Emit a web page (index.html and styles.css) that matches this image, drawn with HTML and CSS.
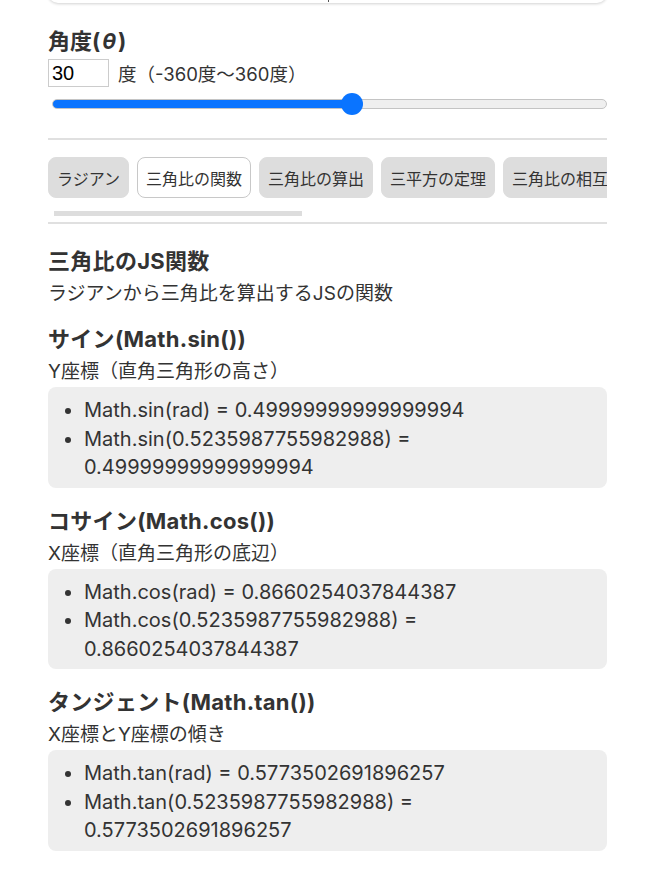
FILE: index.html
```html
<!DOCTYPE html>
<html lang="ja">
<head>
  <meta charset="UTF-8">
  <meta name="viewport" content="width=device-width, initial-scale=1.0">
  <title>三角比のJS関数</title>
  <link rel="stylesheet" href="styles.css">
</head>
<body>
  <div class="page">
    <!-- graph card (scrolled off the top) -->
    <div class="chart-card"></div>

    <h2 class="label">角度(<var>θ</var>)</h2>
    <div class="angle-row">
      <input type="text" class="angle-input" value="30">
      <span class="angle-note">度（-360度〜360度）</span>
    </div>
    <input type="range" class="angle-range" min="-360" max="360" value="30">

    <hr class="line">

    <!-- Tabs -->
    <div class="tabs">
      <button class="tab">ラジアン</button>
      <button class="tab active">三角比の関数</button>
      <button class="tab">三角比の算出</button>
      <button class="tab">三平方の定理</button>
      <button class="tab">三角比の相互関係</button>
    </div>
    <div class="scroll-track"><div class="scroll-thumb"></div></div>

    <hr class="line line-tight">

    <h3 class="title">三角比のJS関数</h3>
    <p class="lead">ラジアンから三角比を算出するJSの関数</p>

    <div class="func">
      <h3 class="title">サイン(Math.sin())</h3>
      <p class="lead">Y座標（直角三角形の高さ）</p>
      <ul class="result">
        <li>Math.sin(rad) = 0.49999999999999994</li>
        <li>Math.sin(0.5235987755982988) = 0.49999999999999994</li>
      </ul>
    </div>

    <div class="func">
      <h3 class="title">コサイン(Math.cos())</h3>
      <p class="lead">X座標（直角三角形の底辺）</p>
      <ul class="result">
        <li>Math.cos(rad) = 0.8660254037844387</li>
        <li>Math.cos(0.5235987755982988) = 0.8660254037844387</li>
      </ul>
    </div>

    <div class="func">
      <h3 class="title">タンジェント(Math.tan())</h3>
      <p class="lead">X座標とY座標の傾き</p>
      <ul class="result">
        <li>Math.tan(rad) = 0.5773502691896257</li>
        <li>Math.tan(0.5235987755982988) = 0.5773502691896257</li>
      </ul>
    </div>
  </div>
</body>
</html>
```

FILE: styles.css
```css
body {
  margin: 0;
  font-family: Inter, "Noto Sans CJK JP", sans-serif;
  color: #333;
  background: #fff;
  overflow: hidden;
}

.page {
  padding: 0 47px 40px 48px;
}

/* card of the graph, only its bottom edge is visible */
.chart-card {
  position: relative;
  height: 30px;
  margin-top: -27px;
  border-radius: 10px;
  box-shadow: 0 1px 3px rgba(0, 0, 0, 0.18);
}

.chart-card::after {
  content: "";
  position: absolute;
  left: 50%;
  top: 0;
  bottom: 1px;
  width: 1px;
  background: #555;
}

.label {
  font-size: 22px;
  line-height: 28px;
  font-weight: bold;
  margin: 24px 0 0;
}

.label var {
  font-style: italic;
  padding: 0 2px;
}

.angle-row {
  display: flex;
  align-items: center;
  margin-top: 4px;
}

.angle-input {
  box-sizing: border-box;
  width: 61px;
  height: 28px;
  border: 1px solid #ccc;
  padding: 0 3px;
  font-family: "Liberation Sans", sans-serif;
  font-size: 20px;
  color: #000;
}

.angle-note {
  margin-left: 9px;
  font-size: 18.5px;
}

.angle-range {
  -webkit-appearance: none;
  appearance: none;
  display: block;
  box-sizing: border-box;
  width: calc(100% - 4px);
  height: 22px;
  margin: 6px 0 0 4px;
  background: transparent;
}

.angle-range::-webkit-slider-runnable-track {
  height: 10px;
  border-radius: 5px;
  box-sizing: border-box;
  border: 1px solid #c4c4c4;
  background: linear-gradient(to right, #0a74ff 54%, #efefef 54%);
}

.angle-range::-webkit-slider-thumb {
  -webkit-appearance: none;
  width: 22px;
  height: 22px;
  margin-top: -7px;
  border-radius: 50%;
  background: #0a74ff;
  border: none;
}

.line {
  border: none;
  border-top: 2px solid #e0e0e0;
  margin: 23px 0 0;
}

.line-tight {
  margin-top: 6px;
}

.tabs {
  display: flex;
  gap: 8px;
  margin-top: 17px;
  overflow: hidden;
}

.tab {
  flex-shrink: 0;
  height: 41px;
  padding: 0 8px;
  border: 1px solid #ddd;
  border-radius: 8px;
  background: #ddd;
  font-family: inherit;
  font-size: 16px;
  color: #333;
}

.tab.active {
  background: #fff;
  border-color: #c8c8c8;
}

.scroll-track {
  margin-top: 13px;
  height: 5px;
}

.scroll-thumb {
  width: 248px;
  height: 5px;
  margin-left: 6px;
  background: #ddd;
}

.title {
  font-size: 22px;
  line-height: 28px;
  font-weight: bold;
  letter-spacing: 0.3px;
  margin: 23px 0 0;
}

.lead {
  font-size: 19px;
  line-height: 24px;
  margin: 7px 0 0;
}

.func .title {
  margin-top: 19px;
}

.result {
  margin: 3px 0 0;
  padding: 9px 10px 6px 36px;
  background: #eee;
  border-radius: 8px;
  font-size: 20px;
  line-height: 28.5px;
}
```
